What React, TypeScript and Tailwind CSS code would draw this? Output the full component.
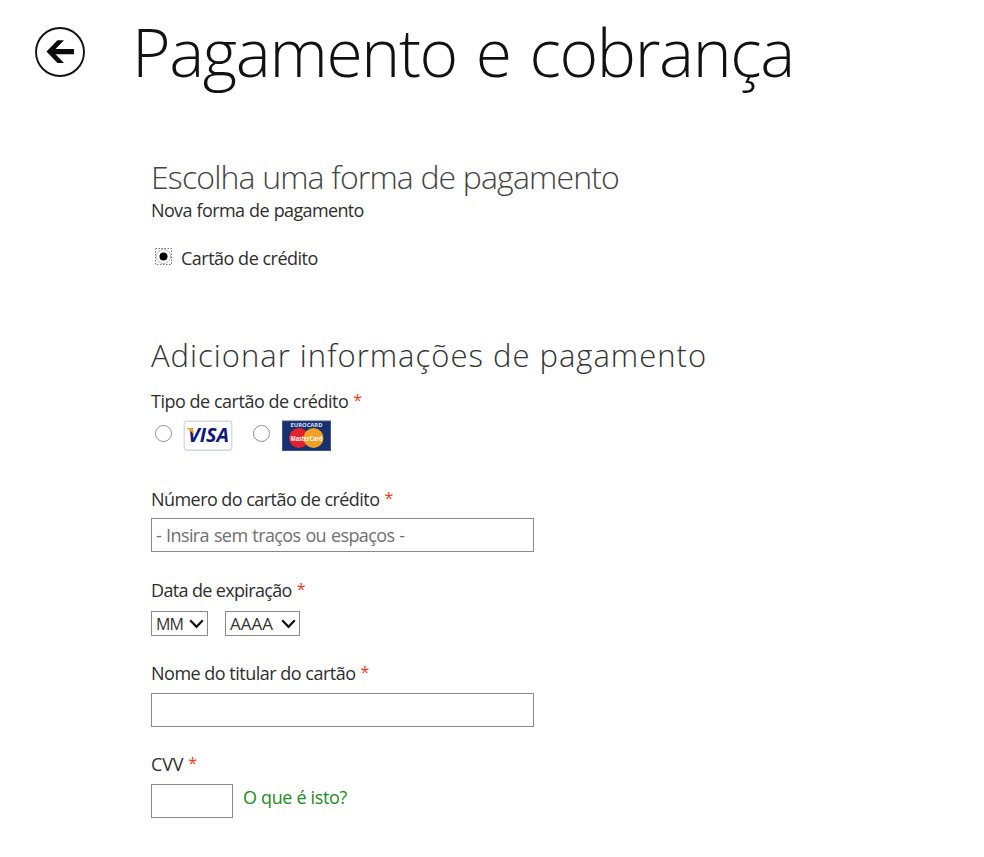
import React from 'react';

interface LabelProps {
  children: React.ReactNode;
  className?: string;
  required?: boolean;
}

function Label({ children, className = '', required = true }: LabelProps) {
  return (
    <div className={`flex h-6 items-center whitespace-nowrap text-[18px] leading-6 ${className}`}>
      <span>{children}</span>
      {required && <span className="ml-[5px] pb-[2px] text-[16px] leading-[22px] text-[#f03a1c]">*</span>}
    </div>
  );
}

function BackButton() {
  return (
    <button className="mt-[27px] ml-[35px] h-[50px] w-[50px] shrink-0">
      <svg viewBox="0 0 50 50" className="h-full w-full" fill="none">
        <circle cx="25" cy="25" r="24" stroke="#111" strokeWidth="1.9" />
        <path d="M11.5 24.6 L22.5 13.2 H29 L20.5 22 H39 V27.2 H20.5 L29 36 H22.5 Z" fill="#0a0a0a" />
      </svg>
    </button>
  );
}

function Visa() {
  return (
    <svg width="49" height="31" viewBox="0 0 49 31" className="overflow-visible">
      <rect x="1.25" y="1.25" width="47.5" height="29" rx="2.5" fill="#fff" stroke="#d4d6e2" strokeWidth="1.3" />
      <text x="5" y="22.3" textLength="41" lengthAdjust="spacingAndGlyphs" fontFamily="Open Sans, sans-serif" fontSize="19" fontWeight="700" fontStyle="italic" fill="#10187c">VISA</text>
      <path d="M3 8 H8.5 Q10 8 10.2 9.5 L11 15.5 Q8.5 10.5 3 8 Z" fill="#eda52c" />
    </svg>
  );
}

function MasterCard() {
  return (
    <svg width="49" height="31" viewBox="0 0 49 31" className="overflow-visible">
      <rect x="0.5" y="1" width="48" height="29.5" fill="#17306f" stroke="#42568a" />
      <text x="8.5" y="7" textLength="32" lengthAdjust="spacingAndGlyphs" fontFamily="Open Sans, sans-serif" fontSize="5" fontWeight="700" fill="#dfe4f2">EUROCARD</text>
      <circle cx="17" cy="18" r="10" fill="#e3212b" />
      <circle cx="31.5" cy="18" r="10" fill="#f2a126" />
      <text x="8.5" y="20.5" textLength="32" lengthAdjust="spacingAndGlyphs" fontFamily="Open Sans, sans-serif" fontSize="7" fontWeight="700" fill="#fff">MasterCard</text>
    </svg>
  );
}

function Radio({ className = '' }: { className?: string }) {
  return (
    <input
      type="radio"
      name="card"
      className={`h-[17px] w-[17px] shrink-0 appearance-none rounded-full border-[1.5px] border-[#8f8f8f] bg-white ${className}`}
    />
  );
}

function Select({ label, className }: { label: string; className: string }) {
  return (
    <button className={`flex h-[25px] items-center justify-between border border-[#8a8a8a] pr-[3px] pl-[4px] leading-none text-[#333] ${className}`}>
      <span>{label}</span>
      <svg width="15" height="10" viewBox="0 0 15 10" fill="none" stroke="#111" strokeWidth="2.2">
        <path d="M1.2 1.2 L7.5 7.8 L13.8 1.2" />
      </svg>
    </button>
  );
}

export default function App() {
  return (
    <div className="h-[857px] w-[984px] overflow-hidden bg-white font-['Open_Sans',sans-serif] text-[#2e2e2e]">
      <header className="flex h-[156px] items-start">
        <BackButton />
        <h1 className="mt-[6px] ml-[47px] text-[66px] leading-[90px] font-light tracking-[-1.35px] [word-spacing:3px] whitespace-nowrap text-[#111]">
          Pagamento e cobrança
        </h1>
      </header>

      <main className="pl-[151px]">
        <section>
          <h2 className="text-[32px] leading-[41px] font-light tracking-[-0.85px] whitespace-nowrap text-[#444]">
            Escolha uma forma de pagamento
          </h2>
          <Label required={false} className="mt-[1px] tracking-[-0.65px] [word-spacing:0.8px]">Nova forma de pagamento</Label>
          <div className="mt-[24px] flex h-6 items-center">
            <svg width="17" height="17" viewBox="0 0 17 17" fill="none" className="mr-[9px] ml-1 -mt-1">
              <rect x="0.5" y="0.5" width="16" height="16" stroke="#777" strokeDasharray="1.5 1.5" />
              <circle cx="8.5" cy="8.5" r="7" stroke="#999" strokeDasharray="2 1" />
              <circle cx="8.5" cy="8.5" r="4" fill="#000" />
            </svg>
            <Label required={false} className="tracking-[-0.5px]">Cartão de crédito</Label>
          </div>
        </section>

        <section className="mt-[65px]">
          <h2 className="text-[31px] leading-[40px] font-light tracking-[1px] whitespace-nowrap text-[#333]">
            Adicionar informações de pagamento
          </h2>
          <Label className="mt-[14px] tracking-[-0.48px]">Tipo de cartão de crédito</Label>
          <div className="mt-[7px] flex h-[31px] items-center">
            <Radio className="mr-[11px] ml-1 -mt-1" />
            <Visa />
            <Radio className="mr-[12px] ml-[21px] -mt-1" />
            <MasterCard />
          </div>

          <Label className="mt-[36px] tracking-[-0.55px]">Número do cartão de crédito</Label>
          <input
            placeholder="- Insira sem traços ou espaços -"
            className="mt-[7px] block h-[34px] w-[383px] border border-[#8a8a8a] px-[4px] text-[18px] leading-none tracking-[-0.6px] [word-spacing:0.8px] placeholder:text-[#707070]"
          />

          <Label className="mt-[26px] tracking-[-0.65px]">Data de expiração</Label>
          <div className="mt-[9px] flex">
            <Select label="MM" className="w-[57px] text-[16px] tracking-[-1px]" />
            <Select label="AAAA" className="ml-[17px] w-[75px] text-[17px]" />
          </div>

          <Label className="mt-[25px] tracking-[-0.5px]">Nome do titular do cartão</Label>
          <input className="mt-[8px] block h-[34px] w-[383px] border border-[#8a8a8a] px-[5px]" />

          <Label className="mt-[25px] tracking-[-0.2px]">CVV</Label>
          <div className="mt-[8px] flex">
            <input className="block h-[34px] w-[82px] border border-[#8a8a8a] px-[5px]" />
            <a href="#" className="ml-[10px] text-[18px] leading-[26px] tracking-[-0.35px] text-[#1f8a1f]">O que é isto?</a>
          </div>
        </section>
      </main>
    </div>
  );
}
